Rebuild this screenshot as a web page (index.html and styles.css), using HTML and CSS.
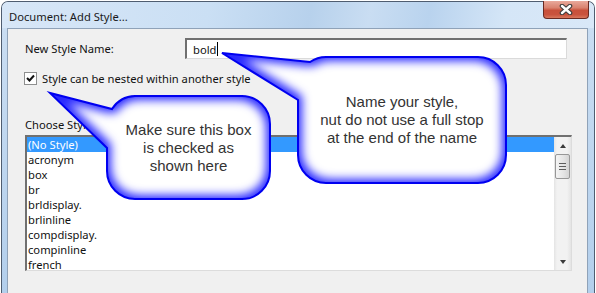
FILE: index.html
```html
<!DOCTYPE html>
<html>
<head>
  <title>Document: Add Style</title>
  <link rel="stylesheet" href="styles.css">
</head>
<body>
  <div class="window">
    <div class="titlebar">
      <span class="title">Document: Add Style...</span>
      <div class="close-btn">
        <svg width="14" height="11" viewBox="0 0 14 11">
          <path d="M3 2 L11 9 M11 2 L3 9" stroke="#3c3c3c" stroke-width="4.6" stroke-linecap="round"/>
          <path d="M3 2 L11 9 M11 2 L3 9" stroke="#ffffff" stroke-width="2.4" stroke-linecap="round"/>
        </svg>
      </div>
    </div>

    <div class="client">
      <div class="name-row">
        <span class="name-label">New Style Name:</span>
        <div class="textbox"><span>bold</span><span class="caret"></span></div>
      </div>

      <div class="check-row">
        <span class="checkbox">
          <svg width="11" height="11" viewBox="0 0 11 11">
            <path d="M2 5 L4.5 7.5 L9 2.5" fill="none" stroke="#111" stroke-width="2"/>
          </svg>
        </span>
        <span>Style can be nested within another style</span>
      </div>

      <div class="choose-label">Choose Style:</div>

      <div class="listbox">
        <ul class="items">
          <li class="selected">(No Style)</li>
          <li>acronym</li>
          <li>box</li>
          <li>br</li>
          <li>brldisplay.</li>
          <li>brlinline</li>
          <li>compdisplay.</li>
          <li>compinline</li>
          <li>french</li>
        </ul>
        <div class="scrollbar">
          <div class="arrow"><span class="tri-up"></span></div>
          <div class="thumb"><span></span><span></span><span></span></div>
          <div class="track"></div>
          <div class="arrow"><span class="tri-down"></span></div>
        </div>
      </div>
    </div>
  </div>

  <!-- tutorial callouts drawn over the dialog -->
  <div class="callouts">
    <svg width="596" height="293" viewBox="0 0 596 293">
      <defs>
        <filter id="glow" x="-20%" y="-20%" width="140%" height="140%">
          <feMorphology operator="erode" radius="4"/>
          <feGaussianBlur stdDeviation="5"/>
        </filter>
        <clipPath id="clip-name">
          <path d="M326 57 H478 A28 28 0 0 1 506 85 V155 A28 28 0 0 1 478 183 H326 A28 28 0 0 1 298 155 V100 L222 53 L310 62 A28 28 0 0 1 326 57 Z"/>
        </clipPath>
        <clipPath id="clip-check">
          <path d="M135 96 H242 A28 28 0 0 1 270 124 V171 A28 28 0 0 1 242 199 H135 A28 28 0 0 1 107 171 V148 L50 93 L112 109 A28 28 0 0 1 135 96 Z"/>
        </clipPath>
      </defs>

      <g>
        <path d="M326 57 H478 A28 28 0 0 1 506 85 V155 A28 28 0 0 1 478 183 H326 A28 28 0 0 1 298 155 V100 L222 53 L310 62 A28 28 0 0 1 326 57 Z" fill="#2a2aff"/>
        <path d="M326 57 H478 A28 28 0 0 1 506 85 V155 A28 28 0 0 1 478 183 H326 A28 28 0 0 1 298 155 V100 L222 53 L310 62 A28 28 0 0 1 326 57 Z" fill="#fff" filter="url(#glow)" clip-path="url(#clip-name)"/>
        <path d="M326 57 H478 A28 28 0 0 1 506 85 V155 A28 28 0 0 1 478 183 H326 A28 28 0 0 1 298 155 V100 L222 53 L310 62 A28 28 0 0 1 326 57 Z" fill="none" stroke="#0000f0" stroke-width="2"/>
      </g>

      <g>
        <path d="M135 96 H242 A28 28 0 0 1 270 124 V171 A28 28 0 0 1 242 199 H135 A28 28 0 0 1 107 171 V148 L50 93 L112 109 A28 28 0 0 1 135 96 Z" fill="#2a2aff"/>
        <path d="M135 96 H242 A28 28 0 0 1 270 124 V171 A28 28 0 0 1 242 199 H135 A28 28 0 0 1 107 171 V148 L50 93 L112 109 A28 28 0 0 1 135 96 Z" fill="#fff" filter="url(#glow)" clip-path="url(#clip-check)"/>
        <path d="M135 96 H242 A28 28 0 0 1 270 124 V171 A28 28 0 0 1 242 199 H135 A28 28 0 0 1 107 171 V148 L50 93 L112 109 A28 28 0 0 1 135 96 Z" fill="none" stroke="#0000f0" stroke-width="2"/>
      </g>
    </svg>

    <div class="callout-text callout-name">Name your style,<br>nut do not use a full stop<br>at the end of the name</div>
    <div class="callout-text callout-check">Make sure this box<br>is checked as<br>shown here</div>
  </div>
</body>
</html>
```

FILE: styles.css
```css
body {
  margin: 0;
  width: 596px;
  height: 293px;
  overflow: hidden;
  position: relative;
  background-color: #fff;
  font-family: "Noto Sans", "DejaVu Sans", sans-serif;
  font-size: 11.2px;
  line-height: 15px;
  color: #111;
}

.window {
  margin: 1px 1px 0 1px;
  height: 292px;
  box-sizing: border-box;
  display: flex;
  flex-direction: column;
  border: 1px solid #4f5d70;
  border-bottom: none;
  border-radius: 7px 7px 0 0;
  background: linear-gradient(to bottom, #dbe8f6 0, #c9ddf2 30px, #b3cfec 100%);
  padding: 0 6px 0 5px;
}

.titlebar {
  height: 26px;
  display: flex;
  align-items: center;
  justify-content: space-between;
  margin: 0 -6px 0 -5px;
  padding-left: 7px;
  background: linear-gradient(100deg, #d8e7f7 0%, #cadff4 35%, #b7d1ec 52%, #c9ddf2 62%, #b9d3ee 72%, #d5e6f7 85%, #d9e8f8 100%);
  border-radius: 6px 6px 0 0;
}

.title {
  color: #1a1a1a;
  margin-top: 2px;
}

.close-btn {
  align-self: flex-start;
  margin-top: -1px;
  margin-right: 5px;
  width: 44px;
  height: 17px;
  border: 1px solid #6a2a22;
  border-top: none;
  border-radius: 0 0 4px 4px;
  background: linear-gradient(to bottom, #e9a99b 0%, #d9826f 40%, #c8503b 55%, #c9533e 80%, #d8775d 100%);
  display: flex;
  align-items: center;
  justify-content: center;
}

.client {
  flex: 1;
  border: 1px solid #8fa2b8;
  border-bottom: none;
  background-color: #f0f0f0;
}

.name-row {
  display: flex;
  align-items: center;
  margin-top: 9px;
  padding-left: 17px;
}

.name-label {
  width: 160px;
}

.textbox {
  width: 382px;
  height: 21px;
  box-sizing: border-box;
  display: flex;
  align-items: center;
  padding-left: 6px;
  background-color: #fff;
  border-style: solid;
  border-width: 2px 1px 1px 2px;
  border-color: #707070 #dadada #dadada #707070;
}

.caret {
  width: 1px;
  height: 14px;
  margin-left: 1px;
  background-color: #000;
}

.check-row {
  display: flex;
  align-items: center;
  gap: 5px;
  margin-top: 12px;
  padding-left: 16px;
}

.checkbox {
  width: 13px;
  height: 13px;
  box-sizing: border-box;
  border: 1px solid #8e8f8f;
  background-color: #fff;
  display: flex;
  align-items: center;
  justify-content: center;
}

.choose-label {
  margin-top: 31px;
  padding-left: 17px;
}

.listbox {
  margin: 3px 0 0 17px;
  width: 547px;
  height: 136px;
  box-sizing: border-box;
  display: flex;
  background-color: #fff;
  border-style: solid;
  border-width: 2px 1px 1px 2px;
  border-color: #707070 #dcdcdc #dcdcdc #707070;
}

.items {
  flex: 1;
  list-style: none;
  margin: 0;
  padding: 0;
}

.items li {
  height: 15px;
  padding-left: 1px;
}

.items li.selected {
  background-color: #3399ff;
  color: #fff;
}

.scrollbar {
  width: 17px;
  display: flex;
  flex-direction: column;
  background: linear-gradient(to right, #e4e4e4 0, #f2f2f2 3px, #f2f2f2 13px, #e4e4e4 100%);
}

.arrow {
  height: 17px;
  display: flex;
  align-items: center;
  justify-content: center;
}

.tri-up {
  width: 0;
  height: 0;
  border-left: 3.5px solid transparent;
  border-right: 3.5px solid transparent;
  border-bottom: 4px solid #3a3a3a;
}

.tri-down {
  width: 0;
  height: 0;
  border-left: 3.5px solid transparent;
  border-right: 3.5px solid transparent;
  border-top: 4px solid #3a3a3a;
}

.thumb {
  height: 25px;
  margin: 0 1px 0 1px;
  box-sizing: border-box;
  border: 1px solid #979797;
  border-radius: 2px;
  background: linear-gradient(to right, #f4f4f4, #e4e4e4 60%, #d4d4d4);
  display: flex;
  flex-direction: column;
  align-items: center;
  justify-content: center;
  gap: 2px;
}

.thumb span {
  width: 7px;
  height: 1px;
  background-color: #5e5e5e;
}

.track {
  flex: 1;
}

.callouts {
  position: absolute;
  top: 0;
  left: 0;
  width: 596px;
  height: 293px;
  pointer-events: none;
}

.callouts svg {
  position: absolute;
  top: 0;
  left: 0;
}

.callout-text {
  position: absolute;
  display: flex;
  align-items: center;
  justify-content: center;
  text-align: center;
  font-family: "Liberation Sans", Arial, sans-serif;
  font-size: 15px;
  line-height: 18px;
  color: #333;
}

.callout-name {
  left: 298px;
  top: 57px;
  width: 208px;
  height: 126px;
}

.callout-check {
  left: 107px;
  top: 96px;
  width: 163px;
  height: 103px;
}
```
